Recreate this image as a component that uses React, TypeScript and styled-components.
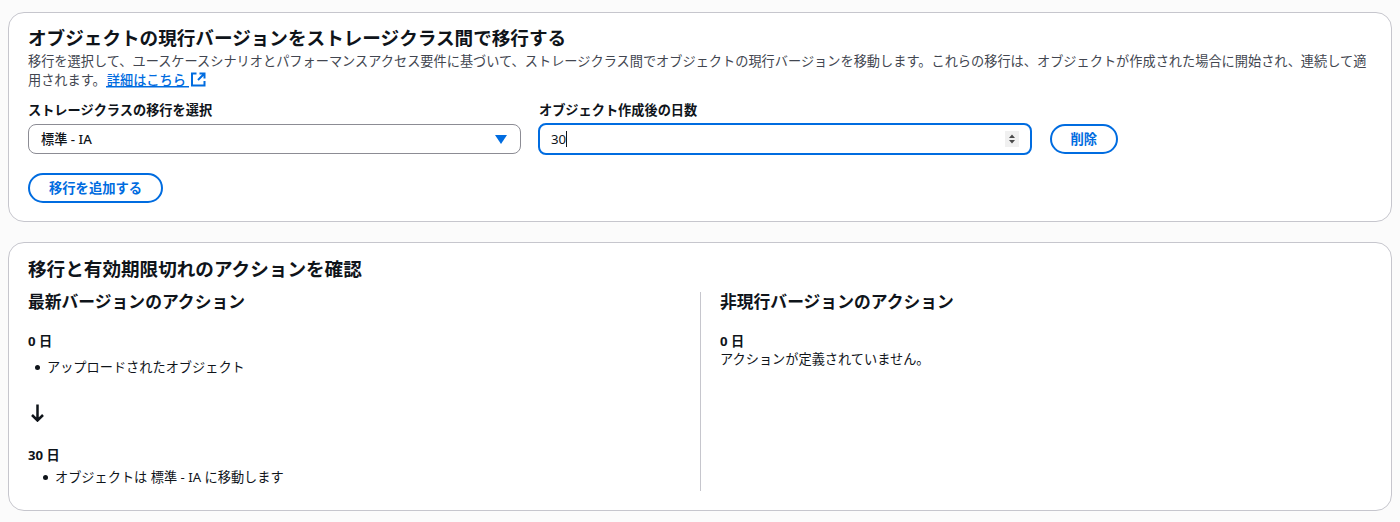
import React from "react";
import styled, { createGlobalStyle } from "styled-components";

const GlobalStyle = createGlobalStyle`
	html, body {
		margin: 0;
		padding: 0;
		background: #fbfbfb;
	}
	body {
		font-family: "Noto Sans", "Noto Sans CJK JP", sans-serif;
		color: #0f141a;
	}
`;

const Page = styled.div`
	display: flex;
	flex-direction: column;
	gap: 20px;
	padding: 12px 8px 10px 8px;
`;

const Card = styled.section<{ $top: number; $bottom: number }>`
	background: #ffffff;
	border: 1px solid #c6c6cd;
	border-radius: 16px;
	padding: ${(props) => props.$top}px 19px ${(props) => props.$bottom}px;
`;

const CardTitle = styled.h2`
	margin: 0;
	font-size: 18.6px;
	line-height: 24px;
	font-weight: 700;
	color: #0f141a;
`;

const Description = styled.p`
	margin: 2px 0 11px;
	font-size: 13.2px;
	line-height: 19px;
	color: #424650;
`;

const LearnMore = styled.a`
	color: #006ce0;
	font-weight: 500;
	text-decoration: none;
	padding: 0 3px 0 1px;
	margin-right: 2px;
	background: linear-gradient(#006ce0, #006ce0) left bottom 2px / 100% 1.5px no-repeat;
`;

const ExternalIcon = styled.svg`
	width: 15px;
	height: 15px;
	vertical-align: -2px;
	fill: none;
	stroke: #006ce0;
	stroke-width: 2;
`;

const TransitionRow = styled.div`
	display: grid;
	grid-template-columns: 493px 494px auto;
	column-gap: 17px;
	align-items: start;
	justify-content: start;
`;

const Field = styled.div<{ $gap: number }>`
	display: flex;
	flex-direction: column;
	gap: ${(props) => props.$gap}px;
`;

const FieldLabel = styled.label<{ $inset?: boolean }>`
	font-size: 13.2px;
	line-height: 18px;
	font-weight: 600;
	color: #0f141a;
	padding-left: ${(props) => (props.$inset ? "1px" : "0")};
`;

const SelectBox = styled.div`
	height: 30px;
	box-sizing: border-box;
	border: 1px solid #8c8c94;
	border-radius: 8px;
	background: #fff;
	display: flex;
	align-items: center;
	justify-content: space-between;
	padding: 0 13px 2px 12px;
	font-size: 13.2px;
	font-weight: 500;
	color: #0f141a;
`;

const CaretIcon = styled.svg`
	width: 12px;
	height: 9px;
	margin-top: 2px;
	fill: #006ce0;
`;

const NumberBox = styled.div`
	height: 32px;
	box-sizing: border-box;
	border: 2px solid #006ce0;
	border-radius: 8px;
	background: #fff;
	display: flex;
	align-items: center;
	justify-content: space-between;
	padding: 0 11px 1px 11px;
	font-size: 13.2px;
	color: #0f141a;
`;

const NumberValue = styled.span`
	border-right: 1px solid #0f141a;
	line-height: 16px;
`;

const Spinner = styled.svg`
	width: 14px;
	height: 16px;
	background: #f0f0f0;
	fill: #4a4a4a;
`;

const PillButton = styled.button`
	height: 30px;
	box-sizing: border-box;
	padding: 0 19px 2px;
	border: 2px solid #006ce0;
	border-radius: 20px;
	background: #fff;
	color: #006ce0;
	font-family: inherit;
	font-size: 13.3px;
	font-weight: 600;
	display: block;
`;

const DeleteButton = styled(PillButton)`
	margin: 23px 0 0 1px;
	padding: 0 18.5px 2px;
`;

const AddRow = styled.div`
	margin-top: 18px;
`;

const Columns = styled.div`
	display: grid;
	grid-template-columns: 672px 1fr;
	margin-top: 11px;
`;

const Column = styled.div<{ $divided?: boolean }>`
	min-height: 199px;
	${(props) => (props.$divided ? "border-left: 1px solid #c6c6cd; padding-left: 19px;" : "")}
`;

const ColumnTitle = styled.h3`
	margin: 0 0 20px;
	font-size: 16.8px;
	line-height: 20px;
	font-weight: 600;
	color: #0f141a;
`;

const DayLabel = styled.div`
	font-size: 13.2px;
	line-height: 18px;
	font-weight: 700;
	color: #0f141a;
`;

const Plain = styled.div`
	font-size: 13.2px;
	line-height: 18px;
	color: #0f141a;
`;

const ActionList = styled.ul<{ $indent: number; $gap: number }>`
	list-style: none;
	margin: ${(props) => props.$gap}px 0 0;
	padding: 0 0 0 ${(props) => props.$indent}px;
	font-size: 13.2px;
	line-height: 18px;
	color: #0f141a;
`;

const ActionItem = styled.li`
	display: flex;
	align-items: center;
	gap: 7px;

	&::before {
		content: "";
		width: 5px;
		height: 5px;
		border-radius: 50%;
		background: #0f141a;
		flex: none;
	}
`;

const ArrowIcon = styled.svg`
	display: block;
	width: 18px;
	height: 18px;
	margin: 28px 0 24px 1px;
	fill: none;
	stroke: #0f141a;
	stroke-width: 2.5;
`;

export default function App() {
	return (
		<>
			<GlobalStyle />
			<Page>
				<Card $top={13} $bottom={18}>
					<CardTitle>オブジェクトの現行バージョンをストレージクラス間で移行する</CardTitle>
					<Description>
						移行を選択して、ユースケースシナリオとパフォーマンスアクセス要件に基づいて、ストレージクラス間でオブジェクトの現行バージョンを移動します。これらの移行は、オブジェクトが作成された場合に開始され、連続して適用されます。
						<LearnMore href="#">詳細はこちら</LearnMore>
						<ExternalIcon viewBox="0 0 15 15">
							<path d="M5.5 1.5H1v12h12.5V9" />
							<path d="M8.5 1.5h5v5M13.5 1.5L7 8" />
						</ExternalIcon>
					</Description>
					<TransitionRow>
						<Field $gap={5}>
							<FieldLabel>ストレージクラスの移行を選択</FieldLabel>
							<SelectBox>
								<span>標準 - IA</span>
								<CaretIcon viewBox="0 0 12 9">
									<path d="M0 0h12L6 9z" />
								</CaretIcon>
							</SelectBox>
						</Field>
						<Field $gap={4}>
							<FieldLabel $inset>オブジェクト作成後の日数</FieldLabel>
							<NumberBox>
								<NumberValue>30</NumberValue>
								<Spinner viewBox="0 0 14 16">
									<path d="M7 3.5l3 3.5H4zM7 12.5l3-3.5H4z" />
								</Spinner>
							</NumberBox>
						</Field>
						<DeleteButton>削除</DeleteButton>
					</TransitionRow>
					<AddRow>
						<PillButton>移行を追加する</PillButton>
					</AddRow>
				</Card>
				<Card $top={14} $bottom={19}>
					<CardTitle>移行と有効期限切れのアクションを確認</CardTitle>
					<Columns>
						<Column>
							<ColumnTitle>最新バージョンのアクション</ColumnTitle>
							<DayLabel>0 日</DayLabel>
							<ActionList $indent={7} $gap={8}>
								<ActionItem>アップロードされたオブジェクト</ActionItem>
							</ActionList>
							<ArrowIcon viewBox="0 0 18 18">
								<path d="M8.5 0.5v16M3 11l5.5 5.5 5.5-5.5" />
							</ArrowIcon>
							<DayLabel>30 日</DayLabel>
							<ActionList $indent={15} $gap={4}>
								<ActionItem>オブジェクトは 標準 - IA に移動します</ActionItem>
							</ActionList>
						</Column>
						<Column $divided>
							<ColumnTitle>非現行バージョンのアクション</ColumnTitle>
							<DayLabel>0 日</DayLabel>
							<Plain>アクションが定義されていません。</Plain>
						</Column>
					</Columns>
				</Card>
			</Page>
		</>
	);
}
